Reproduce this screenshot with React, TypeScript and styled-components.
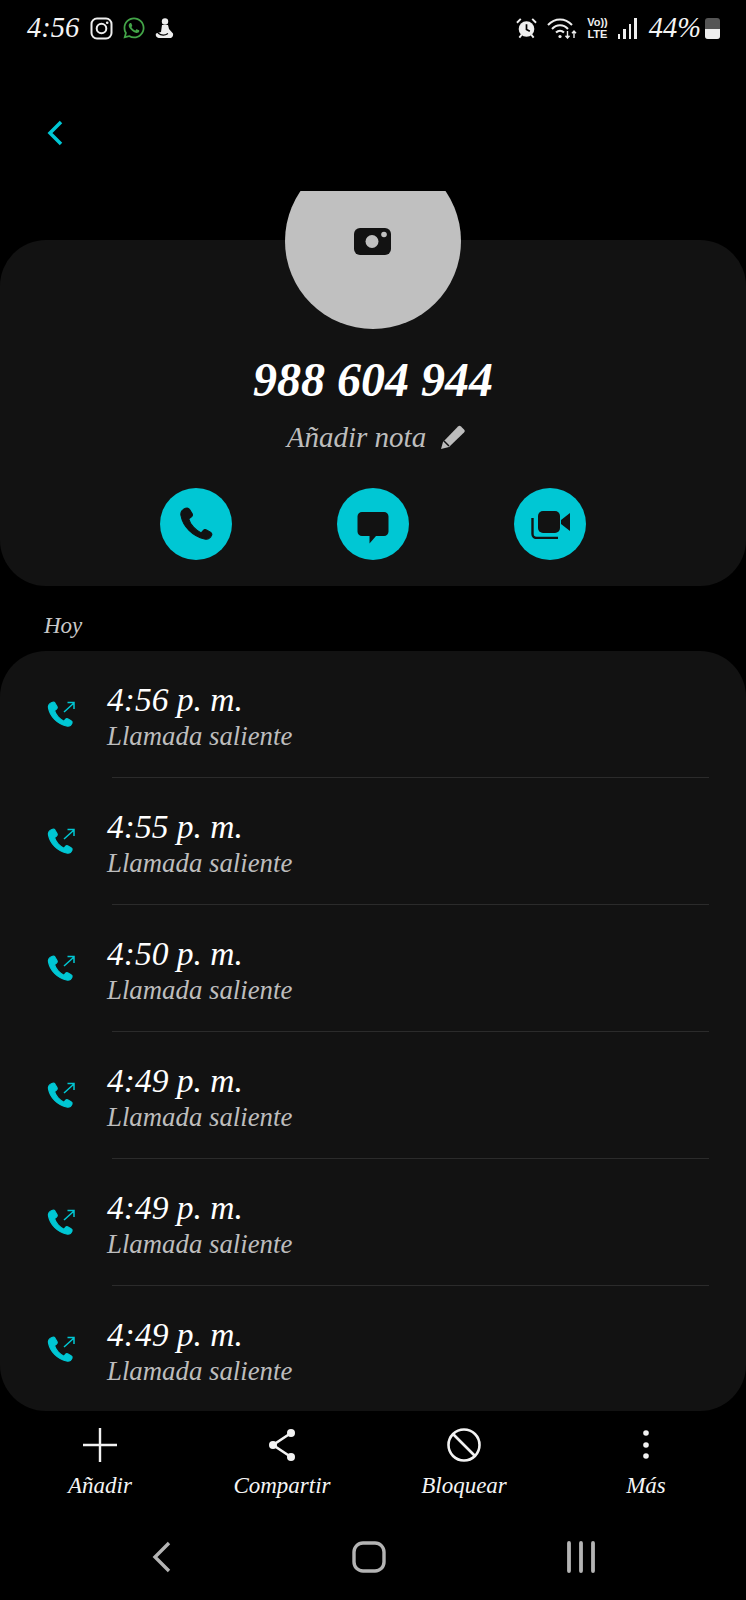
import { createGlobalStyle } from "styled-components";
import styled from "styled-components";
import { FaWhatsapp } from "react-icons/fa";

const TEAL = "#00c7d4";
const CARD = "#121212";
const HANDSET =
  "M6 4.500c-2.500 1-4 3-3.500 5.500C4 18.500 11.500 26 20.500 28c2.500.5 4.500-.5 5.500-3 .4-1-.2-1.800-1-2.300l-3-1.700c-1-.5-1.900-.2-2.500.5l-1.500 1.800C14 21.500 9.500 17 8.500 12.500l2-1.500c.8-.6 1-1.500.5-2.500L9 5.200C8.400 4.300 7 4.100 6 4.500z";

const calls = ["4:56", "4:55", "4:50", "4:49", "4:49", "4:49"];

function OutgoingIcon() {
  return (
    <svg width="30" height="30" viewBox="0 0 30 30">
      <path d={HANDSET} fill={TEAL} stroke={TEAL} strokeWidth="1.200" strokeLinejoin="round" />
      <path d="M18 14 28 5M21.500 4.500H28V11" fill="none" stroke={TEAL} strokeWidth="1.500" />
    </svg>
  );
}

export default function App() {
  return (
    <>
      <GlobalStyle />
      <Page>
        <StatusBar>
          <StatusGroup>
            <StatusTime>4:56</StatusTime>
            <AppIcons>
              <svg width="23" height="23" viewBox="0 0 23 23">
                <rect x="1.500" y="1.500" width="20" height="20" rx="5.500" fill="none" stroke="#eee" strokeWidth="2" />
                <circle cx="11.500" cy="11.500" r="4.800" fill="none" stroke="#eee" strokeWidth="2" />
                <circle cx="17.200" cy="5.800" r="1.300" fill="#eee" />
              </svg>
              <FaWhatsapp size={24} color="#43a548" />
              <svg width="19" height="22" viewBox="0 0 19 22">
                <circle cx="10" cy="4.500" r="3.200" fill="#eee" />
                <path d="M7 8h6l1 4 4 4.500c.6 2.500-1 4.500-3 4.500H5c-3 0-5-2-4-4.500l5-1.500 1-7z" fill="#eee" />
                <path d="M3 16c3 2.500 7 2.500 10 .5" fill="none" stroke="#000" strokeWidth="1.200" />
              </svg>
            </AppIcons>
          </StatusGroup>
          <StatusGroup>
            <svg width="21" height="22" viewBox="0 0 22 22">
              <circle cx="11" cy="12" r="8.200" fill="#eee" />
              <path d="M11 7v5.500l3.500 2" fill="none" stroke="#000" strokeWidth="1.800" />
              <path d="M1 5.500 5 1.500M21 5.500l-4-4M3.500 21l2.500-3M18.500 21 16 18" stroke="#eee" strokeWidth="2" />
            </svg>
            <svg width="30" height="22" viewBox="0 0 30 22">
              <path d="M1 8c7-7.500 17-7.500 24 0M5 12c4.500-5 11.500-5 16 0M9 15.500c2.500-2.500 5.500-2.500 8 0" fill="none" stroke="#eee" strokeWidth="2" />
              <circle cx="13" cy="19.500" r="1.600" fill="#eee" />
              <path d="M20.500 14v7m-2-2.300 2 2.300 2-2.300M27 21v-7m-2 2.300 2-2.300 2 2.300" fill="none" stroke="#eee" strokeWidth="1.400" />
            </svg>
            <VoLte>
              <span>Vo))</span>
              <span>LTE</span>
            </VoLte>
            <SignalBars>
              {[5, 10, 15, 21].map((h, i) => (
                <SignalBar key={i} $height={h} />
              ))}
            </SignalBars>
            <Percent>
              <StatusTime>44%</StatusTime>
              <Battery>
                <BatteryLevel />
              </Battery>
            </Percent>
          </StatusGroup>
        </StatusBar>

        <Header>
          <svg width="16" height="26" viewBox="0 0 16 26">
            <path d="M14 2 3 13l11 11" fill="none" stroke={TEAL} strokeWidth="3.500" />
          </svg>
        </Header>

        <ContactCard>
          <AvatarClip>
            <Avatar>
              <svg width="38" height="28" viewBox="0 0 38 28">
                <rect width="37" height="27" rx="6" fill={CARD} />
                <circle cx="18" cy="13.500" r="6.500" fill="#c0c0c0" />
                <circle cx="30" cy="6.500" r="2.800" fill="#c0c0c0" />
              </svg>
            </Avatar>
          </AvatarClip>
          <PhoneNumber>988 604 944</PhoneNumber>
          <NoteRow>
            Añadir nota
            <svg width="24" height="24" viewBox="0 0 24 24">
              <path d="M0 24l2-7L17 1.500c1-1 2-1 3 0l3 3c1 1 1 2 0 3L8 22 0 24z" fill="#bdbdbd" />
              <path d="M3 16l5 5" stroke={CARD} strokeWidth="1.500" />
            </svg>
          </NoteRow>
          <ActionRow>
            <ActionButton>
              <svg width="34" height="34" viewBox="1 3.500 26 26">
                <path d={HANDSET} fill={CARD} stroke={CARD} strokeWidth="0.800" strokeLinejoin="round" />
              </svg>
            </ActionButton>
            <ActionButton>
              <svg width="34" height="40" viewBox="0 0 34 40">
                <path d="M6 8h22a4.500 4.500 0 0 1 4.500 4.500v15A4.500 4.500 0 0 1 28 32h-8l-6.500 7.500V32H6a4.500 4.500 0 0 1-4.500-4.500v-15A4.500 4.500 0 0 1 6 8z" fill={CARD} />
              </svg>
            </ActionButton>
            <ActionButton>
              <svg width="42" height="30" viewBox="0 0 42 30">
                <rect x="9" y="2" width="22" height="22" rx="5" fill={CARD} />
                <path d="M32 11l9-7v18l-9-7z" fill={CARD} />
                <path d="M3.500 9v16a4 4 0 0 0 4 4H29" fill="none" stroke={CARD} strokeWidth="2.400" />
              </svg>
            </ActionButton>
          </ActionRow>
        </ContactCard>

        <DayLabel>Hoy</DayLabel>

        <CallList>
          {calls.map((time, i) => (
            <CallRow key={i}>
              <CallIcon>
                <OutgoingIcon />
              </CallIcon>
              <CallBody $divider={i < calls.length - 1}>
                <CallTime>{time} p. m.</CallTime>
                <CallType>Llamada saliente</CallType>
              </CallBody>
            </CallRow>
          ))}
        </CallList>

        <Toolbar>
          <ToolItem>
            <svg width="36" height="36" viewBox="0 0 36 36">
              <path d="M18 1v34M1 18h34" stroke="#f2f2f2" strokeWidth="2.400" />
            </svg>
            Añadir
          </ToolItem>
          <ToolItem>
            <svg width="36" height="36" viewBox="0 0 36 36">
              <circle cx="27" cy="6" r="4" fill="#f2f2f2" />
              <circle cx="9" cy="18" r="4" fill="#f2f2f2" />
              <circle cx="27" cy="30" r="4" fill="#f2f2f2" />
              <path d="M27 6 9 18l18 12" fill="none" stroke="#f2f2f2" strokeWidth="2.600" />
            </svg>
            Compartir
          </ToolItem>
          <ToolItem>
            <svg width="36" height="36" viewBox="0 0 36 36">
              <circle cx="18" cy="18" r="15.500" fill="none" stroke="#f2f2f2" strokeWidth="2.600" />
              <path d="M7 7l22 22" stroke="#f2f2f2" strokeWidth="2.600" />
            </svg>
            Bloquear
          </ToolItem>
          <ToolItem>
            <svg width="36" height="36" viewBox="0 0 36 36">
              <circle cx="18" cy="6" r="2.800" fill="#f2f2f2" />
              <circle cx="18" cy="18" r="2.800" fill="#f2f2f2" />
              <circle cx="18" cy="29" r="2.800" fill="#f2f2f2" />
            </svg>
            Más
          </ToolItem>
        </Toolbar>

        <NavBar>
          <svg width="20" height="32" viewBox="0 0 20 32">
            <path d="M17 2 3 16l14 14" fill="none" stroke="#b4b4b4" strokeWidth="3.400" />
          </svg>
          <svg width="34" height="32" viewBox="0 0 34 32">
            <rect x="2" y="2" width="30" height="28" rx="9" fill="none" stroke="#b4b4b4" strokeWidth="3.400" />
          </svg>
          <svg width="30" height="32" viewBox="0 0 30 32">
            <path d="M3 2v28M15 2v28M27 2v28" stroke="#b4b4b4" strokeWidth="3.800" strokeLinecap="round" />
          </svg>
        </NavBar>
      </Page>
    </>
  );
}

const GlobalStyle = createGlobalStyle`
  html, body {
    margin: 0;
    background: #000;
  }
  * {
    box-sizing: border-box;
  }
`;

const Page = styled.div`
  width: 746px;
  height: 1600px;
  background: #000;
  color: #fff;
  font-family: "Liberation Serif", serif;
  font-style: italic;
  overflow: hidden;
`;

const StatusBar = styled.div`
  height: 56px;
  padding: 0 26px 0 27px;
  display: flex;
  align-items: center;
  justify-content: space-between;
`;

const StatusGroup = styled.div`
  display: flex;
  align-items: center;
  gap: 10px;
`;

const AppIcons = styled.div`
  margin-left: 1px;
  display: flex;
  align-items: center;
  gap: 9px;
`;

const StatusTime = styled.span`
  font-size: 28.500px;
  line-height: 1;
  color: #f4f4f4;
`;

const VoLte = styled.div`
  display: flex;
  flex-direction: column;
  align-items: center;
  font-family: "Liberation Sans", sans-serif;
  font-style: normal;
  font-weight: 700;
  font-size: 11px;
  line-height: 12px;
  color: #eee;
`;

const SignalBars = styled.div`
  height: 22px;
  margin-right: 2px;
  display: flex;
  align-items: flex-end;
  gap: 3px;
`;

const SignalBar = styled.div<{ $height: number }>`
  width: 2.500px;
  height: ${(p) => p.$height}px;
  background: #eee;
`;

const Percent = styled.div`
  display: flex;
  align-items: center;
  gap: 4px;
`;

const Battery = styled.div`
  width: 15px;
  height: 21px;
  border-radius: 3px;
  background: #555;
  display: flex;
  align-items: flex-end;
  overflow: hidden;
`;

const BatteryLevel = styled.div`
  width: 100%;
  height: 44%;
  background: #eee;
`;

const Header = styled.div`
  height: 135px;
  padding: 64px 0 0 47px;
`;

const ContactCard = styled.section`
  height: 346px;
  margin-top: 49px;
  background: ${CARD};
  border-radius: 46px;
  display: flex;
  flex-direction: column;
  align-items: center;
`;

const AvatarClip = styled.div`
  width: 178px;
  height: 138px;
  margin-top: -49px;
  overflow: hidden;
  display: flex;
  align-items: flex-end;
`;

const Avatar = styled.div`
  flex: none;
  width: 176px;
  height: 176px;
  margin: 0 1px;
  border-radius: 50%;
  background: #c0c0c0;
  display: flex;
  justify-content: center;
  padding-top: 75px;
`;

const PhoneNumber = styled.h1`
  margin: 23px 0 0;
  font-size: 48px;
  line-height: 56px;
  font-weight: 700;
  font-style: italic;
`;

const NoteRow = styled.div`
  margin: 13px 0 0 6px;
  display: flex;
  align-items: center;
  gap: 15px;
  font-size: 29px;
  line-height: 32px;
  color: #bdbdbd;
`;

const ActionRow = styled.div`
  margin-top: 35px;
  display: flex;
  gap: 105px;
`;

const ActionButton = styled.div`
  width: 72px;
  height: 72px;
  border-radius: 50%;
  background: ${TEAL};
  display: flex;
  align-items: center;
  justify-content: center;
`;

const DayLabel = styled.div`
  height: 65px;
  padding: 24px 0 0 44px;
  font-size: 23px;
  line-height: 32px;
  color: #c8c8c8;
`;

const CallList = styled.section`
  height: 760px;
  background: ${CARD};
  border-radius: 46px;
  padding-right: 37px;
`;

const CallRow = styled.div`
  height: 127px;
  display: flex;
`;

const CallIcon = styled.div`
  width: 112px;
  padding: 47px 0 0 46px;
`;

const CallBody = styled.div<{ $divider: boolean }>`
  flex: 1;
  padding-top: 30px;
  border-bottom: 1px solid ${(p) => (p.$divider ? "#2b2b2b" : "transparent")};
`;

const CallTime = styled.div`
  margin-left: -5px;
  font-size: 33.500px;
  line-height: 38px;
  color: #fff;
`;

const CallType = styled.div`
  margin: 2px 0 0 -5px;
  font-size: 26.800px;
  line-height: 30px;
  color: #bdbdbd;
`;

const Toolbar = styled.nav`
  height: 99px;
  padding: 16px 9px 0;
  display: grid;
  grid-template-columns: repeat(4, 1fr);
`;

const ToolItem = styled.div`
  display: flex;
  flex-direction: column;
  align-items: center;
  gap: 8px;
  font-size: 23px;
  line-height: 30px;
  color: #f4f4f4;
`;

const NavBar = styled.div`
  height: 90px;
  padding: 31px 150px 0 152px;
  display: flex;
  align-items: flex-start;
  justify-content: space-between;
`;
